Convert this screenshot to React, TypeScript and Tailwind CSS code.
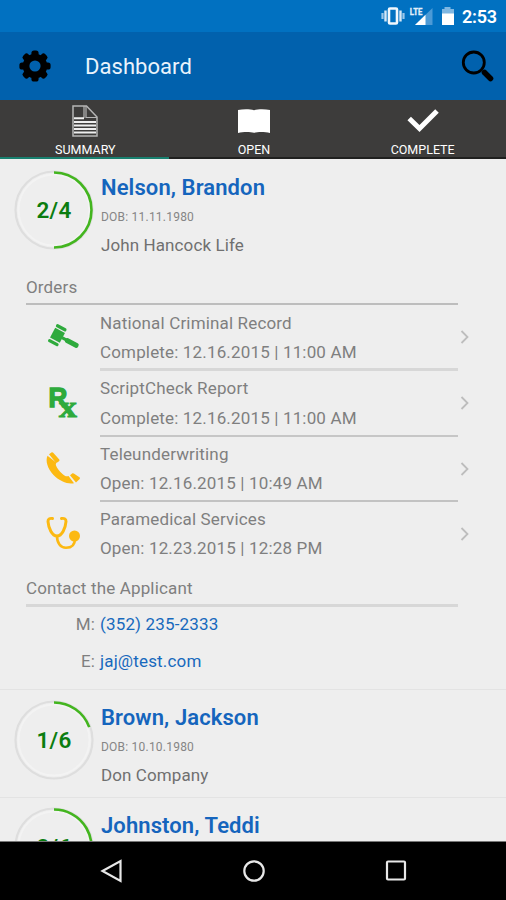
import React from "react";

const GREEN = "#2eaa3c";
const AMBER = "#fcb912";

function Gear() {
  return (
    <svg className="size-8" viewBox="0 0 32 32">
      {[0, 45, 90, 135].map((a) => (
        <rect key={a} x="12.4" y="0.4" width="7.2" height="31.2" rx="2.6" transform={`rotate(${a} 16 16)`} />
      ))}
      <circle cx="16" cy="16" r="9" fill="none" stroke="#000" strokeWidth="6.5" />
      <circle cx="16" cy="16" r="5.6" fill="#0161ad" />
    </svg>
  );
}

function StatusIcons() {
  return (
    <svg className="h-8 w-[80px]" viewBox="0 0 80 32">
      <rect x="11" y="8.5" width="8" height="15" rx="1" fill="none" stroke="#f2f8fd" strokeWidth="2.6" />
      <path d="M7.500 10.500v11M22.500 10.500v11" fill="none" stroke="#d5e7f6" strokeWidth="2.400" />
      <path d="M4.500 13v6M25.500 13v6" fill="none" stroke="#9cc7e9" strokeWidth="2.200" />
      <path d="M37 25L54.500 8v17z" fill="#4c9ad6" />
      <path d="M37 25L47.500 14.800V25z" fill="#fff" />
      <text x="31.800" y="15" fontSize="9" fontWeight="700" fill="#e4f0fa" stroke="#e4f0fa" strokeWidth="0.300" textLength="12.500" lengthAdjust="spacingAndGlyphs">LTE</text>
      <path d="M64 9h2.500V7h6v2H76v5H64z" fill="#7fb7e2" />
      <path d="M64 13.500h12V25H64z" fill="#fff" />
    </svg>
  );
}

function Doc() {
  return (
    <svg className="h-8 w-[26px]" viewBox="0 0 26 32" fill="none" stroke="#b5b5b5">
      <path d="M1 1h13.500L25 12v19H1z" strokeWidth="1.500" />
      <path d="M14 1v11.500h11M12 1v12" strokeWidth="1.200" />
      <path d="M2 13.200h10M2 17h22M2 20.500h22M2 24h22M2 27.500h22" strokeWidth="1.900" stroke="#eee" />
    </svg>
  );
}

function Book() {
  return (
    <svg className="h-6 w-8" viewBox="0 0 32 24" fill="#fff">
      <path d="M0 1C5 0 12 0 16 1.200C20 0 27 0 32 1V24C27 22.800 20 22.800 16 23.800C12 22.800 5 22.800 0 24z" />
    </svg>
  );
}

function Check() {
  return (
    <svg className="h-6 w-8" viewBox="0 0 32 24" fill="none" stroke="#fff" strokeWidth="5">
      <path d="M2.200 9.500L12.500 19.500L30 2" />
    </svg>
  );
}

function Gavel() {
  return (
    <svg className="size-9" viewBox="0 0 36 36" fill={GREEN}>
      <g transform="translate(12.500 17.300) rotate(28)">
        <rect x="-5.500" y="-5.500" width="11" height="11" />
        <rect x="-6" y="-10" width="11.500" height="3.300" rx="1.500" />
        <rect x="-6" y="6.800" width="11.500" height="3.300" rx="1.500" />
        <rect x="5" y="-1.500" width="7" height="3" />
        <rect x="9" y="-2.400" width="14.500" height="5" rx="1.900" />
      </g>
    </svg>
  );
}

function Rx() {
  return (
    <svg className="size-9 overflow-visible" viewBox="0 0 36 36" fill={GREEN} stroke={GREEN} fontWeight="700">
      <text x="3.500" y="22.800" fontSize="28" strokeWidth="1.400" fontFamily="Liberation Sans" textLength="19" lengthAdjust="spacingAndGlyphs">R</text>
      <text x="14" y="33" fontSize="30" strokeWidth="1" fontFamily="Liberation Serif" textLength="18" lengthAdjust="spacingAndGlyphs">x</text>
    </svg>
  );
}

function Phone() {
  return (
    <svg className="size-9" viewBox="0 0 36 36" fill={AMBER}>
      <path d="M2.500 5.800C.2 11 2.500 18.500 8.500 25c6.500 6.500 14.500 9.500 20.500 8.200L23.500 26c-2 .8-3.500.3-6-2-3.500-3-5.500-6-6.500-8.500-.3-1.200-.2-1.800.5-2.700z" />
      <path d="M4 4.300L6.800 2.300Q7.600 2 8.200 2.800L14.300 9.500Q14.900 10.500 14 11.200L11.800 12.800Q11 12.800 10.500 12.200z" />
      <path d="M25 25.300L27.500 23.300Q28.500 23 29.200 23.800L34.800 27.500Q35.200 28.300 34.700 29L31 32.500z" />
    </svg>
  );
}

function Stethoscope() {
  return (
    <svg className="size-9" viewBox="0 0 36 36" fill="none" stroke={AMBER} strokeWidth="3" strokeLinecap="round">
      <path d="M7.500 3.500C4.500 3 3 4 3 6.500C3.500 13 7 21 12 21S20.500 13 21 6.500C21 4 19.500 3 16.500 3.500" />
      <path d="M12 21C12 28 15.500 32.800 21 32.800C27 32.800 30 29.500 30 23.500" strokeWidth="2.600" />
      <circle cx="29.500" cy="21" r="5.500" fill={AMBER} stroke="none" />
    </svg>
  );
}

function Ring({ sweep, label, offset }: { sweep: number; label: string; offset: string }) {
  const a = (sweep * Math.PI) / 180;
  const x = 40 + 37.5 * Math.sin(a);
  const y = 40 - 37.5 * Math.cos(a);
  return (
    <svg className={`${offset} size-20 shrink-0`} viewBox="0 0 80 80">
      <circle cx="40" cy="40" r="38.500" fill="none" stroke="#dedede" strokeWidth="2.200" />
      <circle cx="40" cy="40" r="35.500" fill="none" stroke="#f3f3f3" strokeWidth="2" />
      <path d={`M40 2.500A37.500 37.500 0 0 1 ${x} ${y}`} fill="none" stroke="#43b51f" strokeWidth="2.600" />
      <text x="40" y="48.200" textAnchor="middle" fontSize="22.500" fontWeight="600" letterSpacing="0.300" fill="#0b7d10">{label}</text>
    </svg>
  );
}

interface PersonProps {
  name: string;
  dob: string;
  company: string;
  sweep: number;
  label: string;
  offset: string;
}

function Person(p: PersonProps) {
  return (
    <div className="flex h-[107px] gap-[7px] pl-[14px]">
      <Ring sweep={p.sweep} label={p.label} offset={p.offset} />
      <div className="flex flex-col pt-[13px] whitespace-nowrap">
        <div className="h-7 text-[22px] leading-[29px] font-semibold tracking-[0.1px] text-[#1565bd]">{p.name}</div>
        <div className="mt-1 h-6 text-[12px] leading-6 tracking-[0.22px] text-[#858585]">{p.dob}</div>
        <div className="mt-1 h-6 text-[17px] leading-6 tracking-[0.1px] text-[#707070]">{p.company}</div>
      </div>
    </div>
  );
}

const orders = [
  { icon: <Gavel />, title: "National Criminal Record", status: "Complete: 12.16.2015 | 11:00 AM", line: "h-[2px] bg-[#bdbdbd]", h: "h-[65px]" },
  { icon: <Rx />, title: "ScriptCheck Report", status: "Complete: 12.16.2015 | 11:00 AM", line: "h-[3px] bg-[#d7d7d7]", h: "h-[67px]" },
  { icon: <Phone />, title: "Teleunderwriting", status: "Open: 12.16.2015 | 10:49 AM", line: "h-[2px] bg-[#c6c6c6]", h: "h-[65px]" },
  { icon: <Stethoscope />, title: "Paramedical Services", status: "Open: 12.23.2015 | 12:28 PM", line: "h-[2px] bg-[#c2c2c2]", h: "h-[67px]" },
];

export default function App() {
  return (
    <div className="flex h-[900px] w-[506px] flex-col overflow-hidden bg-[#eeeeee] font-['Roboto',sans-serif]">
      <div className="flex h-8 shrink-0 items-center bg-[#0171c1] pl-[378px] text-white">
        <StatusIcons />
        <span className="ml-[4px] text-[18px] font-semibold tracking-[-0.2px]">2:53</span>
      </div>
      <header className="flex h-[68px] shrink-0 items-center bg-[#0161ad] pr-[12px] pl-[19px]">
        <Gear />
        <h1 className="ml-[34px] text-[22px] tracking-[0.05px] text-[#eaf3fc]">Dashboard</h1>
        <svg className="ml-auto h-8 w-[33px]" viewBox="0 0 33 32" fill="none" stroke="#000">
          <circle cx="12.800" cy="12.500" r="10.500" strokeWidth="2.800" />
          <path d="M23.500 22.500L29.500 28.500" strokeWidth="5.500" strokeLinecap="round" />
        </svg>
      </header>
      <nav className="grid h-[59px] shrink-0 grid-cols-3 bg-[#3d3c3b] text-[12.5px] text-white">
        <div className="flex flex-col items-center border-b-2 border-[#18806f] pl-[2px]">
          <div className="flex h-[42px] items-center"><Doc /></div>
          <div className="h-[15px] leading-[15px]">SUMMARY</div>
        </div>
        <div className="flex flex-col items-center border-b-2 border-[#20201f] pl-[2px]">
          <div className="flex h-[42px] items-center"><Book /></div>
          <div className="h-[15px] leading-[15px]">OPEN</div>
        </div>
        <div className="flex flex-col items-center border-b-2 border-[#20201f] pl-[2px]">
          <div className="flex h-[42px] items-center"><Check /></div>
          <div className="h-[15px] leading-[15px]">COMPLETE</div>
        </div>
      </nav>
      <main className="flex h-[682px] shrink-0 flex-col overflow-hidden">
        <section className="h-[530px] shrink-0 pt-px">
          <Person name="Nelson, Brandon" dob="DOB: 11.11.1980" company="John Hancock Life" sweep={180} label="2/4" offset="mt-[10px]" />
          <div className="ml-[26px] w-[432px] text-[17px] tracking-[0.16px] text-[#7f7f7f]">
            <div className="h-9 pt-2 leading-6">Orders</div>
            {orders.map((o, i) => (
              <div key={o.title} className={`flex flex-col ${o.h}`}>
                <div className={`${o.line} shrink-0 ${i ? "ml-[74px]" : ""}`} />
                <div className="flex">
                  <div className="w-[74px] pt-[13px] pl-[19px]">{o.icon}</div>
                  <div className="pt-[3px] whitespace-nowrap">
                    <div className={`h-[29px] ${i ? "leading-[29px]" : "leading-[31px]"}`}>{o.title}</div>
                    <div className={`h-[30px] ${i > 1 ? "leading-[29px]" : "leading-[30px]"}`}>{o.status}</div>
                  </div>
                  <svg className="mt-[23.5px] -mr-3 ml-auto h-4 w-[10px]" viewBox="0 0 10 16" fill="none" stroke="#bdbdbd" strokeWidth="1.800">
                    <path d="M1.500 2L7.500 8L1.500 14" />
                  </svg>
                </div>
              </div>
            ))}
            <div className="h-[37px] pt-[9px] leading-[25px]">Contact the Applicant</div>
            <div className="h-[3px] bg-[#d7d7d7]" />
            <div className="grid grid-cols-[69px_1fr] gap-x-[5px] leading-[35px]">
              <span className="h-[37px] text-right">M:</span>
              <span className="text-[#1769bd]">(352) 235-2333</span>
              <span className="h-[37px] text-right">E:</span>
              <span className="text-[#1769bd]">jaj@test.com</span>
            </div>
          </div>
        </section>
        <section className="h-[108px] shrink-0 border-t border-[#e3e3e3]">
          <Person name="Brown, Jackson" dob="DOB: 10.10.1980" company="Don Company" sweep={70} label="1/6" offset="mt-[10px]" />
        </section>
        <section className="h-[108px] shrink-0 border-t border-[#e3e3e3]">
          <Person name="Johnston, Teddi" dob="DOB: 10.10.1980" company="Don Company" sweep={120} label="2/6" offset="mt-[9px]" />
        </section>
      </main>
      <footer className="flex h-[59px] shrink-0 items-center justify-between border-t border-[#777] bg-black pr-[99px] pl-[100px]">
        <svg className="h-6 w-[23px]" viewBox="0 0 23 24" fill="none" stroke="#e8e8e8" strokeWidth="2.200"><path d="M2.500 12L20.500 2V22z" /></svg>
        <svg className="size-6" viewBox="0 0 24 24" fill="none" stroke="#e8e8e8" strokeWidth="2.200"><circle cx="12" cy="12" r="9.700" /></svg>
        <svg className="h-6 w-[22px]" viewBox="0 0 22 24" fill="none" stroke="#e8e8e8" strokeWidth="2.200"><rect x="2" y="2.500" width="18" height="18" rx="1" /></svg>
      </footer>
    </div>
  );
}
